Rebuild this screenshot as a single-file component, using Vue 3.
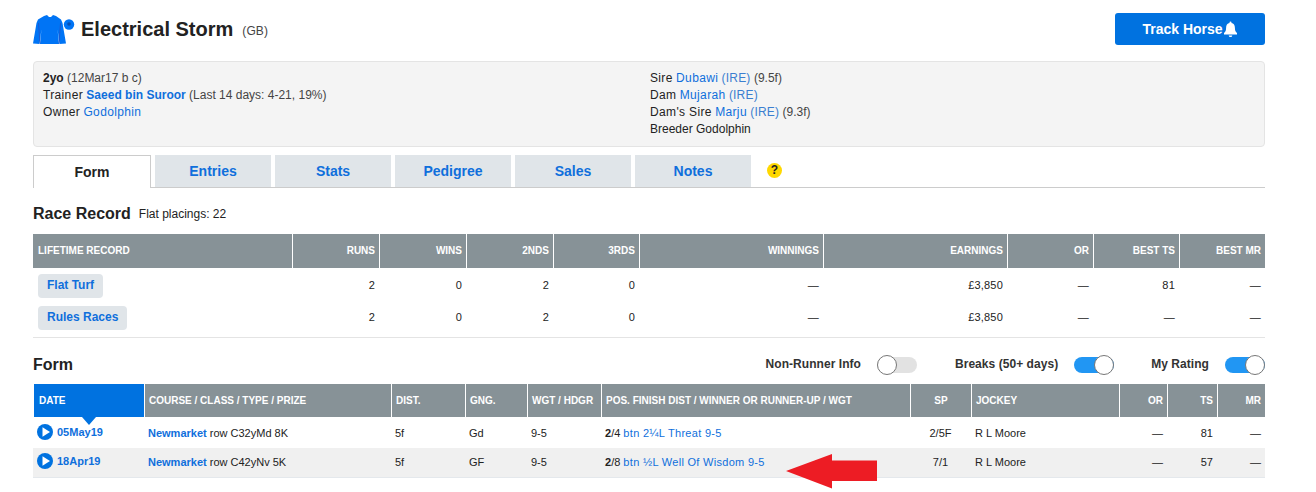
<script setup>
const tabs = ['Entries', 'Stats', 'Pedigree', 'Sales', 'Notes']
const recordHead = ['RUNS', 'WINS', '2NDS', '3RDS', 'WINNINGS', 'EARNINGS', 'OR', 'BEST TS', 'BEST MR']
const records = [
  { name: 'Flat Turf', cells: ['2', '0', '2', '0', '—', '£3,850', '—', '81', '—'] },
  { name: 'Rules Races', cells: ['2', '0', '2', '0', '—', '£3,850', '—', '—', '—'] }
]
const toggles = [
  { label: 'Non-Runner Info', on: false },
  { label: 'Breaks (50+ days)', on: true },
  { label: 'My Rating', on: true }
]
const formRows = [
  { date: '05May19', rest: 'row C32yMd 8K', going: 'Gd', pos: '/4', btn: 'btn 2¼L Threat 9-5', sp: '2/5F', ts: '81' },
  { date: '18Apr19', rest: 'row C42yNv 5K', going: 'GF', pos: '/8', btn: 'btn ½L Well Of Wisdom 9-5', sp: '7/1', ts: '57' }
]
</script>

<template>
  <div class="page">
    <header class="top">
      <svg class="silk" width="42" height="30" viewBox="0 0 42 30" aria-hidden="true">
        <path fill="#0074f5" d="M11 1 L14 0 L16 2 L18 2 L20 0 L23 1 L28 4.500 L29.500 8 L33 28.500 L26.500 29 L24.500 14 L26 29 L7 29 L8.500 14 L6.500 29 L0 28.500 L3.500 8 L5 4.500 Z" />
        <path fill="none" stroke="#2a4fc0" stroke-width="0.7" d="M5.500 8 L7 28.500 M27.500 8 L26 28.500" />
        <circle cx="36" cy="9.500" r="5.200" fill="#0074f5" />
        <circle cx="36" cy="9" r="1.800" fill="#0a4fb0" />
      </svg>
      <h1 class="name">Electrical Storm</h1>
      <span class="origin">(GB)</span>
      <button class="track">
        <span>Track Horse</span>
        <svg width="15" height="16" viewBox="0 0 15 16" aria-hidden="true">
          <path fill="#fff" d="M7.500 0.500a1 1 0 0 1 1 1v.6c2.200.4 3.400 2.200 3.400 4.600 0 2.800.6 3.800 2.100 5.300V13.500H1v-1.500c1.500-1.500 2.100-2.500 2.100-5.300 0-2.400 1.200-4.200 3.400-4.600v-.6a1 1 0 0 1 1-1zM5.700 14.500h3.600a1.800 1.500 0 0 1-3.600 0z" />
        </svg>
      </button>
    </header>

    <section class="info">
      <div class="info-col">
        <div><b class="semi">2yo</b> <span class="muted">(12Mar17 b c)</span></div>
        <div><span class="label">Trainer</span> <a class="strong">Saeed bin Suroor</a> <span class="muted">(Last 14 days: 4-21, 19%)</span></div>
        <div><span class="label">Owner</span> <a class="link">Godolphin</a></div>
      </div>
      <div class="info-col">
        <div><span class="label">Sire</span> <a class="link">Dubawi</a> <span class="soft">(IRE)</span> <span class="muted">(9.5f)</span></div>
        <div><span class="label">Dam</span> <a class="link">Mujarah</a> <span class="soft">(IRE)</span></div>
        <div><span class="label">Dam's Sire</span> <a class="link">Marju</a> <span class="soft">(IRE)</span> <span class="muted">(9.3f)</span></div>
        <div>Breeder Godolphin</div>
      </div>
    </section>

    <nav class="tabs">
      <div class="tab active">Form</div>
      <div v-for="t in tabs" :key="t" class="tab">{{ t }}</div>
      <span class="help">?</span>
    </nav>

    <div class="record-title">
      <h2>Race Record</h2>
      <span>Flat placings: 22</span>
    </div>

    <div class="grid record-grid head-row record-head">
      <div class="th">LIFETIME RECORD</div>
      <div v-for="h in recordHead" :key="h" class="th right">{{ h }}</div>
    </div>
    <div class="record-body">
      <div v-for="r in records" :key="r.name" class="grid record-grid record-row">
        <div class="td"><a class="chip">{{ r.name }}</a></div>
        <div v-for="(c, i) in r.cells" :key="i" class="td right">{{ c }}</div>
      </div>
    </div>

    <div class="form-title">
      <h2>Form</h2>
      <div class="toggles">
        <div v-for="t in toggles" :key="t.label" class="toggle-wrap">
          <span class="toggle-label">{{ t.label }}</span>
          <span class="switch" :class="{ on: t.on }"><span class="knob"></span></span>
        </div>
      </div>
    </div>

    <div class="form-table">
      <div class="grid form-grid head-row form-head">
        <div class="th date-th">DATE</div>
        <div class="th">COURSE / CLASS / TYPE / PRIZE</div>
        <div class="th">DIST.</div>
        <div class="th">GNG.</div>
        <div class="th">WGT / HDGR</div>
        <div class="th">POS. FINISH DIST / WINNER OR RUNNER-UP / WGT</div>
        <div class="th center">SP</div>
        <div class="th">JOCKEY</div>
        <div class="th right">OR</div>
        <div class="th right">TS</div>
        <div class="th right">MR</div>
      </div>
      <div v-for="r in formRows" :key="r.date" class="grid form-grid form-row">
        <div class="td date-cell">
          <svg width="16" height="16" viewBox="0 0 16 16" aria-hidden="true">
            <circle cx="8" cy="8" r="8" fill="#0072e0" />
            <path fill="#fff" d="M5.500 3.200 L13 8 L5.500 12.800 Z" />
          </svg>
          <a class="strong">{{ r.date }}</a>
        </div>
        <div class="td"><a class="strong">Newmarket</a> {{ r.rest }}</div>
        <div class="td">5f</div>
        <div class="td">{{ r.going }}</div>
        <div class="td">9-5</div>
        <div class="td"><b>2</b>{{ r.pos }} <a class="result">{{ r.btn }}</a></div>
        <div class="td center">{{ r.sp }}</div>
        <div class="td">R L Moore</div>
        <div class="td right">—</div>
        <div class="td right">{{ r.ts }}</div>
        <div class="td right">—</div>
      </div>
    </div>

    <svg class="arrow" width="92" height="35" viewBox="0 0 92 35" aria-hidden="true">
      <path fill="#ed1c24" d="M0 17 L46 0 L46 6.500 L91 6.500 L91 27 L46 27 L46 34.500 Z" />
    </svg>
  </div>
</template>

<style>
html, body { margin: 0; overflow: hidden; background: #fff; }
</style>

<style scoped>
.page {
  position: relative;
  box-sizing: border-box;
  width: 1316px;
  height: 492px;
  padding: 13px 51px 0 33px;
  overflow: hidden;
  font: 12px/17px "Liberation Sans", Arial, sans-serif;
  color: #222;
}
a { color: #0f6fdc; }
h1, h2 { margin: 0; color: #222; }
.top { display: flex; align-items: center; height: 32px; }
.silk { margin-top: 1px; margin-right: 6px; }
.name { font-size: 20px; line-height: 32px; }
.origin { margin: 4px 0 0 9px; font-size: 12px; letter-spacing: 0.1px; color: #444; }
.track {
  display: flex; align-items: center; justify-content: center;
  margin-left: auto; width: 150px; height: 32px; padding: 0;
  border: 0; border-radius: 3px; background: #0072e0; color: #fff;
  font: bold 14px "Liberation Sans", Arial, sans-serif;
}
.info {
  display: grid; grid-template-columns: 607px 1fr; box-sizing: border-box;
  margin-top: 16px; height: 86px; padding: 8px 9px;
  background: #f4f4f4; border: 1px solid #e4e4e4; border-radius: 4px;
}
.muted { color: #444; }
.soft { color: #3b7fd0; letter-spacing: 0.2px; }
.semi { font-weight: bold; }
.label { letter-spacing: 0.35px; }
.link { color: #0f6fdc; letter-spacing: 0.35px; }
.strong { font-weight: bold; }
.tabs {
  display: flex; gap: 4px; height: 33px; box-sizing: border-box;
  margin-top: 8px; border-bottom: 1px solid #ccc; position: relative;
}
.tab {
  width: 116px; height: 32px; text-align: center; background: #e0e5e9;
  color: #0f6fdc; font: bold 14px/32px "Liberation Sans", Arial, sans-serif;
}
.tab.active {
  box-sizing: border-box; width: 118px; height: 33px; line-height: 33px;
  background: #fff; color: #222; border: 1px solid #ccc; border-bottom: 0;
}
.help {
  align-self: center; width: 15px; height: 15px; margin: -1px 0 0 12px;
  border-radius: 50%; background: #ffd800; color: #222; text-align: center;
  font: bold 12px/15px "Liberation Sans", Arial, sans-serif;
}
.record-title { display: flex; align-items: center; gap: 8px; margin: 17px 0 11px; height: 18px; }
h2 { font-size: 16px; line-height: 18px; }
.grid { display: grid; }
.record-grid { grid-template-columns: 259px 87px 87px 87px 86px 184px 184px 86px 86px 86px; }
.form-grid { grid-template-columns: 110px 247px 74px 62px 74px 309px 61px 148px 48px 50px 48px; }
.head-row { background: #879297; height: 34px; }
.form-head { height: 33px; }
.th {
  display: flex; align-items: center; box-sizing: border-box;
  padding: 0 4px 0 4px; border-left: 1px solid #fff;
  color: #fff; font-size: 10px; font-weight: bold; white-space: nowrap;
}
.th:first-child { border-left: 0; padding-left: 5px; }
.th.right { justify-content: flex-end; }
.th.center { justify-content: center; }
.record-head .th { padding-bottom: 2px; }
.td { display: flex; align-items: center; box-sizing: border-box; padding: 0 4px 0 4px; white-space: pre; font-size: 11px; }
.td.right { justify-content: flex-end; }
.td.center { justify-content: center; }
.record-body { box-sizing: content-box; border-bottom: 1px solid #e4e4e4; height: 67px; padding-top: 2px; }
.record-row { height: 32px; }
.record-row .td { letter-spacing: 0.2px; padding-bottom: 2px; }
.record-row .td:first-child { padding: 0 4px 0 5px; font-size: 12px; letter-spacing: 0; }
.chip {
  padding: 3px 9px 4px; border-radius: 4px; background: #e0e5e9;
  color: #0f6fdc; font-weight: bold;
}
.form-title {
  display: flex; align-items: center; justify-content: space-between;
  box-sizing: border-box; height: 46px; padding-top: 7px;
}
.toggles { display: flex; }
.toggle-wrap { display: flex; align-items: center; gap: 16px; margin-left: 38px; }
.toggle-wrap:nth-child(3) { margin-left: 37px; }
.toggle-label { font-weight: bold; letter-spacing: 0.05px; color: #333; }
.switch {
  position: relative; display: block; width: 40px; height: 16px;
  border-radius: 8px; background: #e2e2e2;
}
.switch.on { background: #2196f3; }
.knob {
  position: absolute; top: -2px; left: 0; box-sizing: border-box;
  width: 20px; height: 20px; border-radius: 50%; background: #fff; border: 1px solid #777;
}
.on .knob { left: 20px; }
.form-table { margin-left: 1px; }
.date-th { background: #0072e0; position: relative; }
.date-th::after {
  content: ""; position: absolute; left: 48px; bottom: -8px; width: 0; height: 0;
  border-left: 7px solid transparent; border-right: 7px solid transparent; border-top: 8px solid #0072e0;
}
.form-row { height: 31px; }
.form-row .td { padding-top: 2px; }
.form-row + .form-row { height: 29px; margin-left: -1px; padding-left: 1px; background: #f0f0f0; box-shadow: 0 1px 0 #e4e8ec; }
.form-row + .form-row .td { padding-top: 0; }
.form-row .date-cell { padding: 0 4px 1px 3px; gap: 4px; }
.form-row + .form-row .date-cell { padding-bottom: 3px; }
.form-row b { color: #222; }
.result { letter-spacing: 0.3px; }
.arrow { position: absolute; left: 786px; top: 454px; }
</style>
